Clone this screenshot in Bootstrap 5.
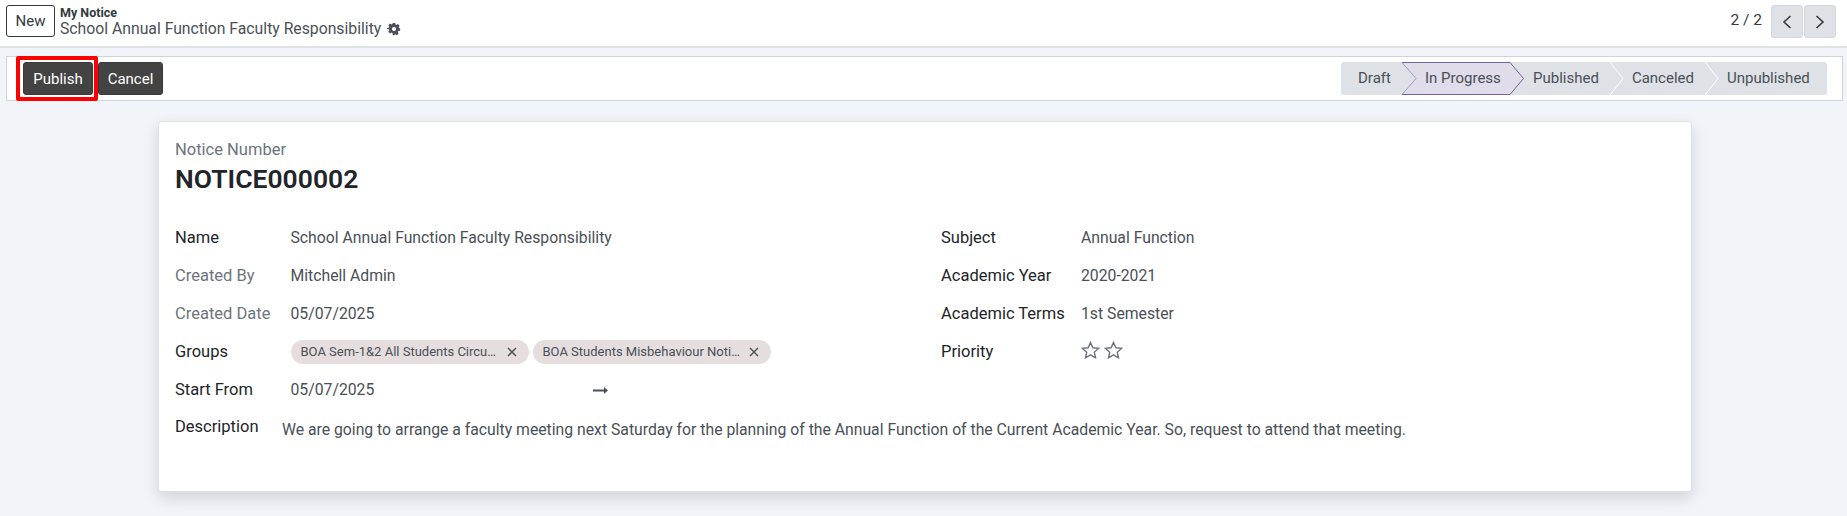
<!DOCTYPE html>
<html lang="en"><head><meta charset="utf-8"><title>My Notice</title>
<link rel="stylesheet" href="https://cdn.jsdelivr.net/npm/bootstrap@5.3.0/dist/css/bootstrap.min.css">
<style>
html,body{height:516px;overflow:hidden}
body{background:#f1f5f9;font-family:Roboto,"Liberation Sans",sans-serif;font-size:15.75px;color:#495057}
.top-head{height:48px;background:#fff;border-bottom:2px solid #dee2e6;padding:5px 11px 0 6px}
.new-btn{width:49px;height:32px;padding:0;border:1px solid #343a40;border-radius:3px;background:#fff;color:#343a40;font-size:15px;line-height:30px;margin-right:5px}
.crumb-main{font-size:12.5px;font-weight:700;line-height:13px;color:#343a40;margin-top:1px}
.crumb-title{font-size:15.75px;line-height:20px;color:#495057}
.gear-icon{margin-left:6px}
.pager-text{font-size:15.5px;color:#343a40;margin-right:9px}
.pg-btn{width:32px;height:33px;padding:0;background:#dee2e6;border:1px solid #d4d8dc;border-radius:3px;color:#343a40;display:flex;align-items:center;justify-content:center}
.pg-next{margin-left:1px}
.act-bar{height:45px;margin:8px 4px 0 6px;background:#fff;border:1px solid #ced4da;padding:0 15px 0 9px}
.act-group{height:33px}
.red-frame{border:4px solid #f00;border-radius:2px;height:45px;width:82px;padding:2px 1px 0 3px;flex-shrink:0}
.dark-btn{height:33px;padding:0;width:70px;background:#434343;border:1px solid #3a3a3a;border-radius:3px;color:#fff;font-size:15px;line-height:30px}
.cancel-btn{width:65px}
.stage-bar{height:33px;background:#dee2e6;border-radius:3px;font-size:15px;color:#495057;line-height:33px;width:486px}
.stage-first{width:60px;padding-left:17px}
.stage-active{position:relative;width:123px;height:33px;padding-left:24px;z-index:0}
.stage-shape{position:absolute;inset:0;z-index:-1}
.stage-sep{margin:0 8px 0 10px}
.stage-pub{margin-left:9px}
.sheet-wrap{padding:20px 155px 0 158px}
.form-sheet{height:371px;background:#fff;border:1px solid #dee2e6;border-radius:3px;box-shadow:0 6px 16px rgba(0,0,0,.14);padding:18px 18px 0 16px}
.num-label{font-size:16.5px;line-height:20px;color:#6c757d}
.num-value{font-size:26.5px;font-weight:600;line-height:36px;color:#212529;margin-top:1px}
.fields{--bs-gutter-x:34px;margin-top:22px}
.f-row{height:38px;align-items:center}
.f-label{color:#212529;font-size:16.5px}
.f-muted{font-size:16.5px;color:#6c757d}
.left-label{width:115.5px}
.right-label{width:140px}
.chip{height:24px;padding:0 12px 0 10px;background:#e6dede;border-radius:12px;font-size:13px;color:#495057;width:238px;gap:7px;white-space:nowrap}
.chip-text{flex:1;min-width:0}
.chip-row{gap:4px}
.date-start{width:302px}
.star-row{gap:4px;margin-bottom:4px}
.desc-row{margin-top:7px}
.desc-label{color:#212529;font-size:16.5px;width:107px;line-height:22px}
.desc-text{line-height:22px;margin-top:3px;white-space:nowrap}
.wrap-none{white-space:nowrap}
</style></head><body>
<header class="top-head d-flex justify-content-between">
 <div class="d-flex">
  <button class="new-btn" type="button">New</button>
  <div>
   <div class="crumb-main">My Notice</div>
   <div class="crumb-title d-flex align-items-center wrap-none">School Annual Function Faculty Responsibility
    <svg class="gear-icon" width="14" height="14" viewBox="0 0 16 16" fill="#495057"><path d="M9.4 1l.3 1.900c.4.1.8.3 1.100.5l1.600-1.100 2 2-1.100 1.600c.2.3.4.7.5 1.100L15 7v2.900l-2.200.4c-.1.4-.3.8-.5 1.100l1.100 1.600-2 2-1.600-1.100c-.3.2-.7.4-1.100.5L8.400 15H6.600l-.4-2.600c-.4-.1-.8-.3-1.100-.5l-1.600 1.100-2-2 1.100-1.600c-.2-.3-.4-.7-.5-1.100L0 7.900V7l2.100-.5c.1-.4.3-.8.5-1.100L1.500 3.800l2-2 1.600 1.100c.3-.2.7-.4 1.100-.5L6.600 1zM8 5.600A2.400 2.400 0 1 0 8 10.400 2.400 2.400 0 0 0 8 5.600z"/></svg>
   </div>
  </div>
 </div>
 <div class="d-flex align-items-start">
  <span class="pager-text mt-1">2 / 2</span>
  <button class="pg-btn" type="button" aria-label="Previous"><svg width="12" height="18" viewBox="0 0 12 18" fill="none" stroke="#343a40" stroke-width="1.600"><path d="M9.500 3L3 9l6.500 6"/></svg></button>
  <button class="pg-btn pg-next" type="button" aria-label="Next"><svg width="12" height="18" viewBox="0 0 12 18" fill="none" stroke="#343a40" stroke-width="1.600"><path d="M2.500 3L9 9l-6.500 6"/></svg></button>
 </div>
</header>
<div class="act-bar d-flex justify-content-between align-items-center">
 <div class="act-group d-flex align-items-center">
  <div class="red-frame d-flex"><button class="dark-btn" type="button">Publish</button></div>
  <button class="dark-btn cancel-btn" type="button">Cancel</button>
 </div>
 <div class="stage-bar d-flex">
  <span class="stage-first">Draft</span>
  <div class="stage-active wrap-none">
   <svg class="stage-shape" viewBox="0 0 123 33" preserveAspectRatio="none"><path d="M1 .5H109L122.500 16.500 109 32.500H1L15 16.500z" fill="#e0dcea"/><path d="M109 .5H1M109 32.500H1M109 .5L122.500 16.500 109 32.500" fill="none" stroke="#71639e"/><path d="M1 .5L15 16.500 1 32.500" fill="none" stroke="#a59fc0"/></svg>
   In Progress
  </div>
  <span class="stage-pub">Published</span>
  <svg class="stage-sep" width="15" height="33" viewBox="0 0 15 33" fill="none" stroke="#fff"><path d="M1 0L14 16.500 1 33"/></svg>
  <span>Canceled</span>
  <svg class="stage-sep" width="15" height="33" viewBox="0 0 15 33" fill="none" stroke="#fff"><path d="M1 0L14 16.500 1 33"/></svg>
  <span>Unpublished</span>
 </div>
</div>
<div class="sheet-wrap">
 <main class="form-sheet">
  <div class="num-label">Notice Number</div>
  <div class="num-value">NOTICE000002</div>
  <div class="row fields">
   <div class="col-6">
    <div class="d-flex f-row"><div class="f-label left-label">Name</div><div>School Annual Function Faculty Responsibility</div></div>
    <div class="d-flex f-row"><div class="left-label f-muted">Created By</div><div>Mitchell Admin</div></div>
    <div class="d-flex f-row"><div class="left-label f-muted">Created Date</div><div>05/07/2025</div></div>
    <div class="d-flex f-row"><div class="f-label left-label">Groups</div><div class="d-flex chip-row">
      <span class="chip d-flex align-items-center"><span class="chip-text">BOA Sem-1&amp;2 All Students Circu…</span><svg width="10" height="10" viewBox="0 0 10 10" stroke="#495057" stroke-width="1.400"><path d="M1 1l8 8M9 1l-8 8"/></svg></span>
      <span class="chip d-flex align-items-center"><span class="chip-text">BOA Students Misbehaviour Noti…</span><svg width="10" height="10" viewBox="0 0 10 10" stroke="#495057" stroke-width="1.400"><path d="M1 1l8 8M9 1l-8 8"/></svg></span>
    </div></div>
    <div class="d-flex f-row"><div class="f-label left-label">Start From</div><div class="d-flex align-items-center"><span class="date-start">05/07/2025</span><svg width="15" height="7" viewBox="0 0 15 7" fill="#495057"><path d="M0 2.500h11V0l4 3.500-4 3.500V4.500H0z"/></svg></div></div>
   </div>
   <div class="col-6">
    <div class="d-flex f-row"><div class="f-label right-label">Subject</div><div>Annual Function</div></div>
    <div class="d-flex f-row"><div class="f-label right-label">Academic Year</div><div>2020-2021</div></div>
    <div class="d-flex f-row"><div class="f-label right-label">Academic Terms</div><div>1st Semester</div></div>
    <div class="d-flex f-row"><div class="f-label right-label">Priority</div><div class="d-flex star-row">
      <svg width="19" height="18" viewBox="0 0 19 18" fill="none" stroke="#6c757d" stroke-width="1.400"><path d="M9.500 1.500l2.400 5.300 5.700.6-4.300 3.800 1.200 5.600-5-2.900-5 2.900 1.200-5.600L1.400 7.400l5.700-.6z"/></svg>
      <svg width="19" height="18" viewBox="0 0 19 18" fill="none" stroke="#6c757d" stroke-width="1.400"><path d="M9.500 1.500l2.400 5.300 5.700.6-4.300 3.800 1.200 5.600-5-2.900-5 2.900 1.200-5.600L1.400 7.400l5.700-.6z"/></svg>
    </div></div>
   </div>
  </div>
  <div class="d-flex desc-row"><div class="desc-label">Description</div><div class="desc-text">We are going to arrange a faculty meeting next Saturday for the planning of the Annual Function of the Current Academic Year. So, request to attend that meeting.</div></div>
 </main>
</div>
<script src="https://cdn.jsdelivr.net/npm/bootstrap@5.3.0/dist/js/bootstrap.bundle.min.js"></script>
</body></html>
